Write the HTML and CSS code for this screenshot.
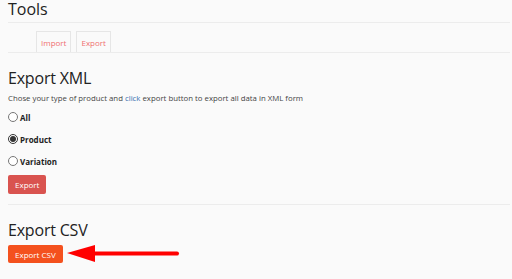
FILE: index.html
```html
<!DOCTYPE html>
<html lang="en">
<head>
  <meta charset="UTF-8" />
  <meta name="viewport" content="width=device-width, initial-scale=1" />
  <title>Tools</title>
  <link rel="stylesheet" href="styles.css">
</head>
<body>
  <div class="wrap">
    <h1 class="page-title">Tools</h1>

    <nav class="tabs">
      <a href="#" class="tab">Import</a>
      <a href="#" class="tab active">Export</a>
    </nav>

    <section class="block">
      <h2>Export XML</h2>
      <p class="hint">Chose your type of product and <a href="#">click</a> export button to export all data in XML form</p>
      <label class="opt"><input type="radio" name="type" /> All</label>
      <label class="opt"><input type="radio" name="type" checked /> Product</label>
      <label class="opt"><input type="radio" name="type" /> Variation</label>
      <button class="btn btn-red">Export</button>
    </section>

    <section class="block last">
      <h2>Export CSV</h2>
      <div class="csv-row">
        <button class="btn btn-orange">Export CSV</button>
        <!-- arrow pointing to the button -->
        <svg class="arrow" width="114" height="20" viewBox="0 0 114 20">
          <polygon points="0,9 28,1 28,18" fill="#f00" />
          <line x1="26" y1="9.5" x2="110" y2="9.5" stroke="#f00" stroke-width="4" stroke-linecap="round" />
        </svg>
      </div>
    </section>
  </div>
</body>
</html>
```

FILE: styles.css
```css
body {
  margin: 0;
  padding: 0;
  background-color: #fafafa;
  font-family: "Open Sans", Arial, sans-serif;
  color: #222;
}
.wrap {
  padding: 0 2px 0 8px;
}
.page-title {
  margin: 0;
  font-size: 16px;
  font-weight: 400;
  line-height: 16px;
  padding: 1px 0 5px;
  border-bottom: 1px solid #ececec;
}
.tabs {
  display: flex;
  gap: 5px;
  padding: 8px 0 0 28px;
  border-bottom: 1px solid #ececec;
}
.tab {
  display: block;
  padding: 5px 4px 3px;
  font-size: 8px;
  line-height: 12px;
  color: #f07070;
  text-decoration: none;
  border: 1px solid #e6e6e6;
  border-bottom: none;
  background: #fafafa;
}
.block {
  padding: 15px 0 10px;
  border-bottom: 1px solid #ececec;
}
.block.last {
  border-bottom: none;
}
.block h2 {
  margin: 0;
  font-size: 16px;
  font-weight: 400;
  line-height: 20px;
  letter-spacing: -0.2px;
}
.hint {
  margin: 5px 0 2px;
  font-size: 7.8px;
  line-height: 11px;
  color: #444;
}
.hint a {
  color: #3a6fb0;
  text-decoration: none;
}
.opt {
  display: flex;
  align-items: center;
  gap: 2px;
  height: 22px;
  font-size: 8px;
  font-weight: bold;
}
.opt input {
  margin: 0;
  width: 10px;
  height: 10px;
  accent-color: #333;
}
.btn {
  display: block;
  border: none;
  border-radius: 2px;
  color: #fff;
  font-family: "Open Sans", Arial, sans-serif;
  font-size: 8px;
  line-height: 11px;
  cursor: pointer;
}
.btn-red {
  margin-top: 3px;
  padding: 4px 7px;
  background-color: #d9534f;
}
.csv-row {
  display: flex;
  align-items: center;
  gap: 4px;
  margin-top: 4px;
}
.btn-orange {
  padding: 4px 7px 3px;
  background-color: #f4511e;
}
```
